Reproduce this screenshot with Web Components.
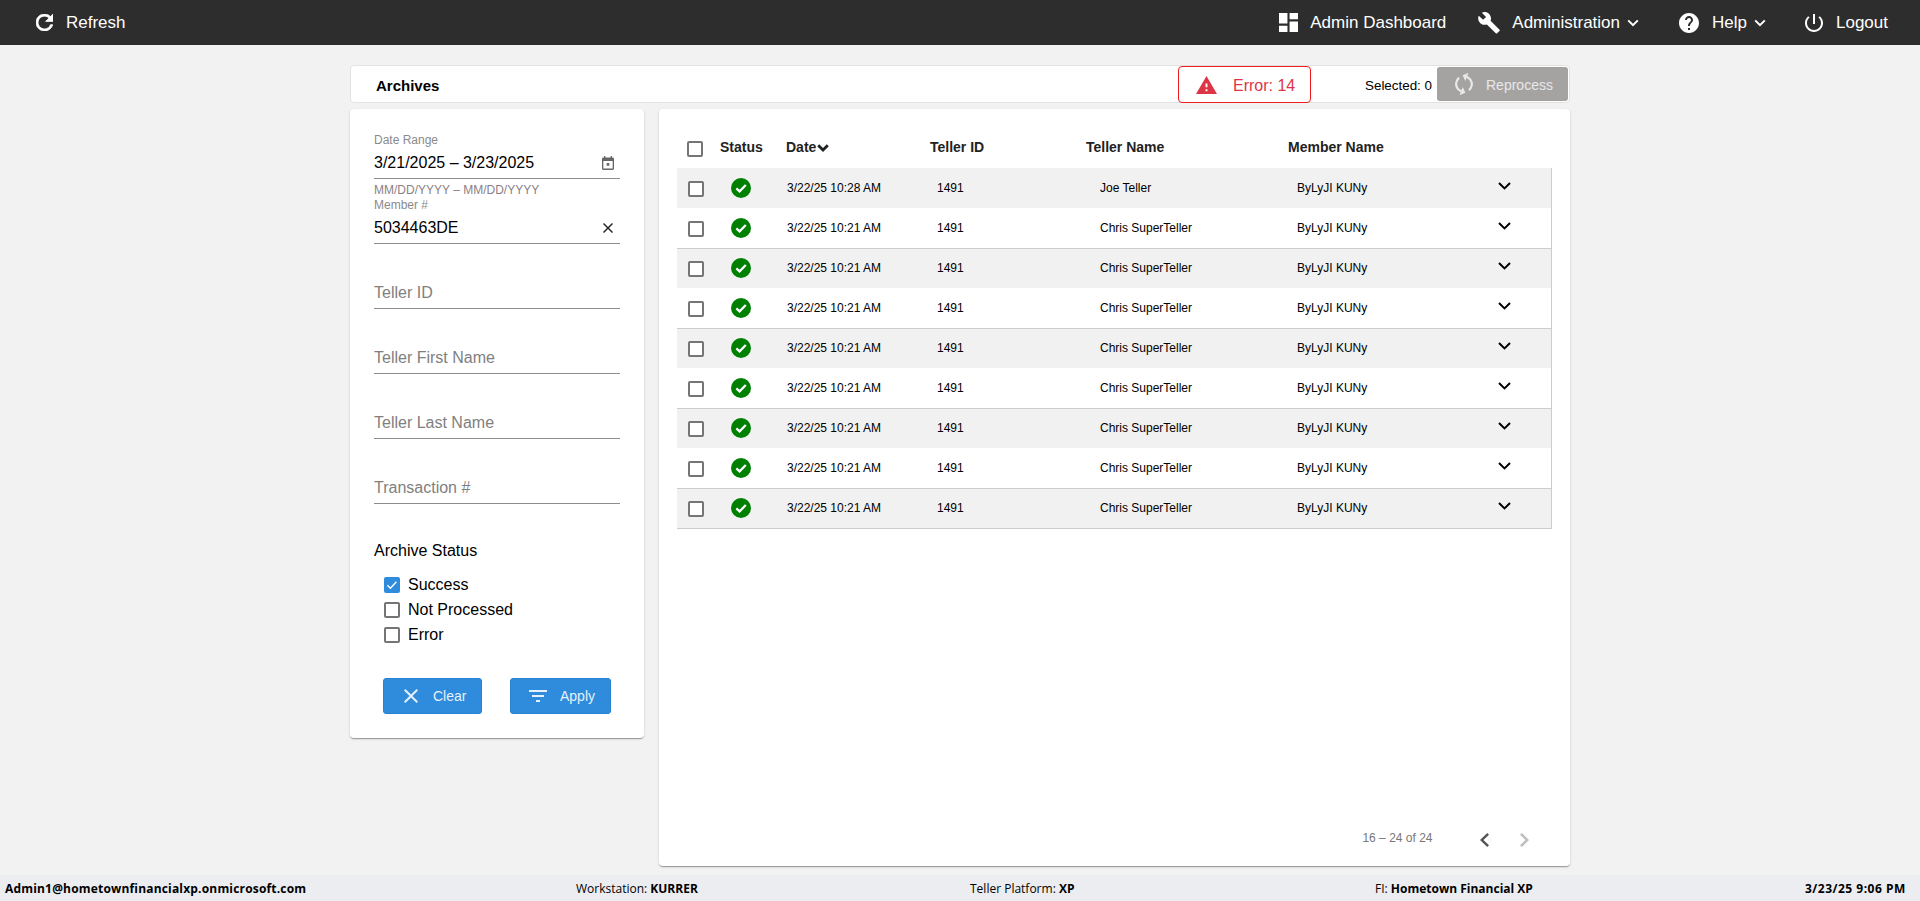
<!DOCTYPE html>
<html lang="en">
<head>
<meta charset="utf-8">
<title>Archives</title>
<style>
  html, body { margin: 0; padding: 0; height: 100%; }
  body { font-family: "Liberation Sans", Arial, sans-serif; background: #f2f2f2; color: #000; }
  app-shell { height: 901px; }
</style>
</head>
<body>
<app-shell>
  <top-nav slot="nav"></top-nav>
  <archive-header slot="header"></archive-header>
  <filter-panel slot="filters"></filter-panel>
  <archive-table slot="table"></archive-table>
  <status-bar slot="status"></status-bar>
</app-shell>

<script>
const ICONS = {
  refresh: ['4 4 16 16', '<path d="M17.65 6.35C16.2 4.9 14.21 4 12 4c-4.42 0-7.99 3.58-7.99 8s3.57 8 7.99 8c3.73 0 6.84-2.55 7.73-6h-2.08c-.82 2.33-3.04 4-5.65 4-3.31 0-6-2.69-6-6s2.69-6 6-6c1.66 0 3.14.69 4.22 1.78L13 11h7V4l-2.35 2.35z" stroke="currentColor" stroke-width=".7"/>'],
  dashboard: ['3 3 18 18', '<path d="M3 13h8V3H3v10zm0 8h8v-6H3v6zm10 0h8V11h-8v10zm0-18v6h8V3h-8z"/>'],
  wrench: ['0.8 1 22.4 22.4', '<path d="M22.7 19l-9.1-9.1c.9-2.3.4-5-1.5-6.9-2-2-5-2.4-7.4-1.3L9 6 6 9 1.6 4.7C.4 7.1.9 10.1 2.9 12.1c1.9 1.9 4.6 2.4 6.9 1.5l9.1 9.1c.4.4 1 .4 1.4 0l2.3-2.3c.5-.4.5-1.1.1-1.4z"/>'],
  help: ['2 2 20 20', '<path d="M12 2C6.48 2 2 6.48 2 12s4.48 10 10 10 10-4.48 10-10S17.52 2 12 2zm1 17h-2v-2h2v2zm2.07-7.75l-.9.92C13.45 12.9 13 13.5 13 15h-2v-.5c0-1.1.45-2.1 1.17-2.83l1.24-1.26c.37-.36.59-.86.59-1.41 0-1.1-.9-2-2-2s-2 .9-2 2H8c0-2.21 1.79-4 4-4s4 1.79 4 4c0 .88-.36 1.68-.93 2.25z"/>'],
  power: ['3 3 18 18', '<path d="M13 3h-2v10h2V3zm4.83 2.17l-1.42 1.42C17.99 7.86 19 9.81 19 12c0 3.87-3.13 7-7 7s-7-3.13-7-7c0-2.19 1.01-4.14 2.58-5.42L6.17 5.17C4.23 6.82 3 9.26 3 12c0 4.97 4.03 9 9 9s9-4.03 9-9c0-2.74-1.23-5.18-3.17-6.83z"/>'],
  chevron: ['0 0 12 8', '<path d="M1.2 1.4L6 6.2l4.8-4.8" fill="none" stroke="currentColor" stroke-width="2"/>'],
  chevronBold: ['0 0 12 8', '<path d="M1.2 1.2L6 6l4.8-4.8" fill="none" stroke="currentColor" stroke-width="2.8"/>'],
  chevronRow: ['0 0 13 8', '<path d="M1 1l5.5 5.4L12 1" fill="none" stroke="currentColor" stroke-width="2"/>'],
  warning: ['1 2 22 19', '<path d="M1 21h22L12 2 1 21zm12-3h-2v-2h2v2zm0-4h-2v-4h2v4z"/>'],
  sync: ['4 1 16 22', '<path d="M12 4V1L8 5l4 4V6c3.31 0 6 2.69 6 6 0 1.01-.25 1.97-.7 2.8l1.46 1.46C19.54 15.03 20 13.57 20 12c0-4.42-3.58-8-8-8zm0 14c-3.31 0-6-2.69-6-6 0-1.01.25-1.97.7-2.8L5.24 7.74C4.46 8.97 4 10.43 4 12c0 4.42 3.58 8 8 8v3l4-4-4-4v3z"/>'],
  calendar: ['3 1 18 20', '<path d="M19 3h-1V1h-2v2H8V1H6v2H5c-1.11 0-1.99.9-1.99 2L3 19c0 1.1.89 2 2 2h14c1.1 0 2-.9 2-2V5c0-1.1-.9-2-2-2zm0 16H5V8h14v11zM10 11h4v4h-4z"/>'],
  close: ['5 5 14 14', '<path d="M19 6.41L17.59 5 12 10.59 6.41 5 5 6.41 10.59 12 5 17.59 6.41 19 12 13.41 17.59 19 19 17.59 13.41 12z"/>'],
  filter: ['3 6 18 12', '<path d="M10 18h4v-2h-4v2zM3 6v2h18V6H3zm3 7h12v-2H6v2z"/>'],
  prev: ['8 6 7.41 12', '<path d="M15.41 7.41L14 6l-6 6 6 6 1.41-1.41L10.83 12z"/>'],
  next: ['8.59 6 7.41 12', '<path d="M10 6L8.59 7.41 13.17 12l-4.58 4.59L10 18l6-6z"/>'],
  ok: ['0 0 20 20', '<circle cx="10" cy="10" r="10" fill="#008000"/><path d="M5.4 10.4l3.2 3 6.2-6.4" fill="none" stroke="#fff" stroke-width="2.3"/>'],
  check: ['0 0 16 16', '<path d="M3.4 8.2l3 3 6-6.4" fill="none" stroke="currentColor" stroke-width="1.4"/>']
};

function shadow(host, html) {
  host.attachShadow({ mode: 'open' }).innerHTML = html;
}

class UiIcon extends HTMLElement {
  connectedCallback() {
    if (this.shadowRoot) return;
    const [vb, body] = ICONS[this.getAttribute('name')];
    const w = this.getAttribute('w'), h = this.getAttribute('h') || w;
    shadow(this, `<style>:host{display:inline-flex;flex:none;width:${w}px;height:${h}px}svg{display:block;width:100%;height:100%;fill:currentColor}</style>
      <svg viewBox="${vb}" preserveAspectRatio="none" aria-hidden="true">${body}</svg>`);
  }
}
customElements.define('ui-icon', UiIcon);

class AppShell extends HTMLElement {
  constructor() {
    super();
    shadow(this, `<style>
      :host{display:flex;flex-direction:column;overflow:hidden}
      main{flex:1;min-height:0;width:1220px;margin:0 auto;padding:20px 0 9px;box-sizing:border-box;display:flex;flex-direction:column;gap:6px}
      .cols{flex:1;min-height:0;display:flex;gap:15px;align-items:flex-start}
      ::slotted(archive-table){align-self:stretch}
    </style>
    <slot name="nav"></slot>
    <main><slot name="header"></slot><div class="cols"><slot name="filters"></slot><slot name="table"></slot></div></main>
    <slot name="status"></slot>`);
  }
}
customElements.define('app-shell', AppShell);

class NavItem extends HTMLElement {
  constructor() {
    super();
    shadow(this, `<style>
      :host{display:inline-flex;align-items:center;height:45px;color:#fff;font-size:17px;cursor:pointer;white-space:nowrap}
      .t{margin-left:var(--gap,12px)}
      ::slotted([slot=caret]){margin-left:7px;margin-top:1px}
    </style><slot name="icon"></slot><span class="t"><slot></slot></span><slot name="caret"></slot>`);
  }
}
customElements.define('nav-item', NavItem);

class TopNav extends HTMLElement {
  constructor() {
    super();
    shadow(this, `<style>
      :host{display:flex;flex:none;height:45px;background:#2d2d2d;padding:0 32px 0 36px;box-sizing:border-box;align-items:center}
      .sp{flex:1}
      .a{margin-left:32px}.b{margin-left:40px}.d{margin-left:39px}
    </style>
    <nav-item style="--gap:13px"><ui-icon slot="icon" name="refresh" w="17"></ui-icon>Refresh</nav-item>
    <span class="sp"></span>
    <nav-item><ui-icon slot="icon" name="dashboard" w="19"></ui-icon>Admin Dashboard</nav-item>
    <nav-item class="a" style="--gap:12px"><ui-icon slot="icon" name="wrench" w="22"></ui-icon>Administration<ui-icon slot="caret" name="chevron" w="12" h="8"></ui-icon></nav-item>
    <nav-item class="b" style="--gap:13px"><ui-icon slot="icon" name="help" w="20"></ui-icon>Help<ui-icon slot="caret" name="chevron" w="12" h="8"></ui-icon></nav-item>
    <nav-item class="d" style="--gap:13px"><ui-icon slot="icon" name="power" w="18"></ui-icon>Logout</nav-item>`);
  }
}
customElements.define('top-nav', TopNav);

class ArchiveHeader extends HTMLElement {
  constructor() {
    super();
    shadow(this, `<style>
      :host{display:flex;flex:none;align-items:center;height:38px;box-sizing:border-box;background:#fff;border:1px solid #e2e2e2;border-radius:4px;padding-left:25px;padding-right:1px}
      h1{margin:0;font-size:15px;font-weight:700;flex:1;color:#000;position:relative;top:1px}
      .err{display:flex;align-items:center;width:133px;height:37px;box-sizing:border-box;border:1px solid #f01a1a;border-radius:4px;padding-left:17px;color:#dc3545;font-size:16px;margin-top:1px}
      .err span{margin-left:16px;position:relative;top:1px}
      .sel{font-size:13.4px;margin:0 5px 0 54px;white-space:nowrap;position:relative;top:1px}
      .btn{display:flex;align-items:center;width:131px;height:34px;background:#a5a3a2;border-radius:3px;color:#e8e8e8;font-size:14px;padding-left:18px;box-sizing:border-box}
      .btn span{margin-left:13px;position:relative;top:1px}
    </style>
    <h1>Archives</h1>
    <div class="err"><ui-icon name="warning" w="21" h="18"></ui-icon><span>Error: 14</span></div>
    <div class="sel">Selected: 0</div>
    <div class="btn"><ui-icon name="sync" w="18" h="24" style="transform:rotate(22deg)"></ui-icon><span>Reprocess</span></div>`);
  }
}
customElements.define('archive-header', ArchiveHeader);

class TextField extends HTMLElement {
  connectedCallback() {
    if (this.shadowRoot) return;
    const label = this.getAttribute('label') || '', value = this.getAttribute('value') || '';
    const ph = this.getAttribute('placeholder') || '', hint = this.getAttribute('hint') || '';
    shadow(this, `<style>
      :host{display:block;font-size:16px}
      .l{height:16px;line-height:16px;font-size:12px;color:#8a8a8a}
      .v{height:30px;box-sizing:border-box;display:flex;align-items:center;justify-content:space-between}
      .p{color:#808080}
      .u{height:1px;background:#8c8c8c}
      .h{font-size:12px;line-height:14px;padding-top:4px;color:#8a7f86}
    </style>
    <div class="l">${label}</div>
    <div class="v"><span class="${value ? '' : 'p'}">${value || ph}</span><slot></slot></div>
    <div class="u"></div>
    ${hint ? `<div class="h">${hint}</div>` : ''}`);
  }
}
customElements.define('text-field', TextField);

class CheckBox extends HTMLElement {
  connectedCallback() {
    if (this.shadowRoot) return;
    const on = this.hasAttribute('checked');
    shadow(this, `<style>
      :host{display:flex;align-items:center;height:16px;font-size:16px;line-height:16px}
      .b{width:16px;height:16px;box-sizing:border-box;border:2px solid #757575;border-radius:2px;flex:none;color:#fff;display:flex;background:#fff}
      .b.on{background:#2f8bdc;border:0}
      .t{margin-left:8px}
      .t:empty{display:none}
    </style><span class="b ${on ? 'on' : ''}">${on ? '<ui-icon name="check" w="16"></ui-icon>' : ''}</span><span class="t"><slot></slot></span>`);
  }
}
customElements.define('check-box', CheckBox);

class ActionButton extends HTMLElement {
  constructor() {
    super();
    shadow(this, `<style>
      :host{display:flex;align-items:center;height:36px;box-sizing:border-box;background:#2f8bdc;border-radius:3px;color:#e6f1fb;font-size:14px;border:1px solid #2a82cf}
      span{margin-left:var(--g,15px)}
    </style><slot name="icon"></slot><span><slot></slot></span>`);
  }
}
customElements.define('action-button', ActionButton);

class FilterPanel extends HTMLElement {
  constructor() {
    super();
    shadow(this, `<style>
      :host{display:block;flex:none;width:294px;background:#fff;border-radius:4px;box-sizing:border-box;padding:23px 24px 24px;box-shadow:0 2px 1px -1px rgba(0,0,0,.2),0 1px 1px rgba(0,0,0,.14),0 1px 3px rgba(0,0,0,.12)}
      .gap{margin-top:18px}
      .t{font-size:16px;line-height:20px;margin-top:37px;margin-bottom:-1px}
      .checks{margin:17px 0 0 10px;display:flex;flex-direction:column;gap:9px}
      .btns{display:flex;margin:35px 0 0 9px;gap:28px}
    </style>
    <text-field label="Date Range" value="3/21/2025 – 3/23/2025" hint="MM/DD/YYYY – MM/DD/YYYY"><ui-icon name="calendar" w="12" h="14" style="color:#666;margin-right:6px"></ui-icon></text-field>
    <text-field label="Member #" value="5034463DE"><ui-icon name="close" w="10" style="color:#222;margin-right:7px"></ui-icon></text-field>
    <text-field class="gap" placeholder="Teller ID"></text-field>
    <text-field class="gap" placeholder="Teller First Name"></text-field>
    <text-field class="gap" placeholder="Teller Last Name"></text-field>
    <text-field class="gap" placeholder="Transaction #"></text-field>
    <div class="t">Archive Status</div>
    <div class="checks">
      <check-box checked>Success</check-box>
      <check-box>Not Processed</check-box>
      <check-box>Error</check-box>
    </div>
    <div class="btns">
      <action-button style="width:99px;padding-left:20px;--g:15px"><ui-icon slot="icon" name="close" w="14"></ui-icon>Clear</action-button>
      <action-button style="width:101px;padding-left:18px;--g:13px"><ui-icon slot="icon" name="filter" w="18" h="12"></ui-icon>Apply</action-button>
    </div>`);
  }
}
customElements.define('filter-panel', FilterPanel);

class ArchiveRow extends HTMLElement {
  connectedCallback() {
    if (this.shadowRoot) return;
    const a = n => this.getAttribute(n);
    shadow(this, `<style>
      :host{display:grid;grid-template-columns:54px 56px 150px 163px 197px 201px 1fr;align-items:center;height:40px;box-sizing:border-box;font-size:12px;color:#000;background:#fff}
      :host([shade]){background:#f1f1f1}
      :host([top]){box-shadow:inset 0 1px 0 #ccc}
      :host([last]){border-bottom:1px solid #ccc;height:41px}
      .cb{padding-left:11px;position:relative;top:1px}
      .chev{position:relative;top:-2px;display:flex}
    </style>
    <div class="cb"><check-box></check-box></div>
    <div style="display:flex"><ui-icon name="ok" w="20"></ui-icon></div>
    <div>${a('date')}</div><div>${a('id')}</div><div>${a('teller')}</div><div>${a('member')}</div>
    <div class="chev"><ui-icon name="chevronRow" w="13" h="8"></ui-icon></div>`);
  }
}
customElements.define('archive-row', ArchiveRow);

class ArchiveTable extends HTMLElement {
  constructor() {
    super();
    const rows = [];
    for (let i = 0; i < 9; i++) {
      const attrs = [
        `date="3/22/25 10:${i === 0 ? '28' : '21'} AM"`, 'id="1491"',
        `teller="${i === 0 ? 'Joe Teller' : 'Chris SuperTeller'}"`, 'member="ByLyJI KUNy"',
        i % 2 === 0 ? 'shade' : '', (i % 2 === 0 && i > 0) ? 'top' : '', i === 8 ? 'last' : ''
      ].join(' ');
      rows.push(`<archive-row ${attrs}></archive-row>`);
    }
    shadow(this, `<style>
      :host{display:flex;flex-direction:column;flex:1;min-width:0;background:#fff;border-radius:4px;box-sizing:border-box;padding:19px 18px 0;box-shadow:0 2px 1px -1px rgba(0,0,0,.2),0 1px 1px rgba(0,0,0,.14),0 1px 3px rgba(0,0,0,.12)}
      .head{display:grid;grid-template-columns:43px 66px 144px 156px 202px 1fr;height:40px;align-items:center;font-size:14px;font-weight:700;color:#222}
      .head>div{position:relative;top:-1px}
      .head .cb{padding-left:10px;top:1px}
      .date{display:flex;align-items:center}
      .list{border-right:1px solid #ccc;flex:none}
      .pager{margin-top:auto;display:flex;justify-content:flex-end;align-items:center;height:40px;margin-bottom:6px;padding-right:7.5px}
      .range{font-size:12px;color:#777;margin-right:32px;position:relative;top:-2px}
      .pb{width:40px;height:40px;display:flex;align-items:center;justify-content:center;color:#555}
      .pb.off{color:#bdbdbd}
    </style>
    <div class="head">
      <div class="cb"><check-box></check-box></div>
      <div>Status</div>
      <div class="date">Date<ui-icon name="chevronBold" w="12" h="8" style="margin-left:1px;margin-top:2px"></ui-icon></div>
      <div>Teller ID</div><div>Teller Name</div><div>Member Name</div>
    </div>
    <div class="list">${rows.join('')}</div>
    <div class="pager">
      <span class="range">16 – 24 of 24</span>
      <span class="pb"><ui-icon name="prev" w="9" h="14"></ui-icon></span>
      <span class="pb off"><ui-icon name="next" w="9" h="14"></ui-icon></span>
    </div>`);
  }
}
customElements.define('archive-table', ArchiveTable);

class StatusBar extends HTMLElement {
  constructor() {
    super();
    shadow(this, `<style>
      :host{display:grid;flex:none;grid-template-columns:571px 394px 405px 430px 1fr;height:26px;align-items:center;padding-left:5px;box-sizing:border-box;background:#ecedf0;font-family:"Open Sans","Liberation Sans",sans-serif;font-size:12px;color:#000;white-space:nowrap}
      b{font-weight:700}
      .mail{letter-spacing:.18px}
      .when{letter-spacing:.5px}
    </style>
    <div><b class="mail">Admin1@hometownfinancialxp.onmicrosoft.com</b></div>
    <div>Workstation: <b>KURRER</b></div>
    <div>Teller Platform: <b>XP</b></div>
    <div>FI: <b>Hometown Financial XP</b></div>
    <div><b class="when">3/23/25 9:06 PM</b></div>`);
  }
}
customElements.define('status-bar', StatusBar);
</script>
</body>
</html>
